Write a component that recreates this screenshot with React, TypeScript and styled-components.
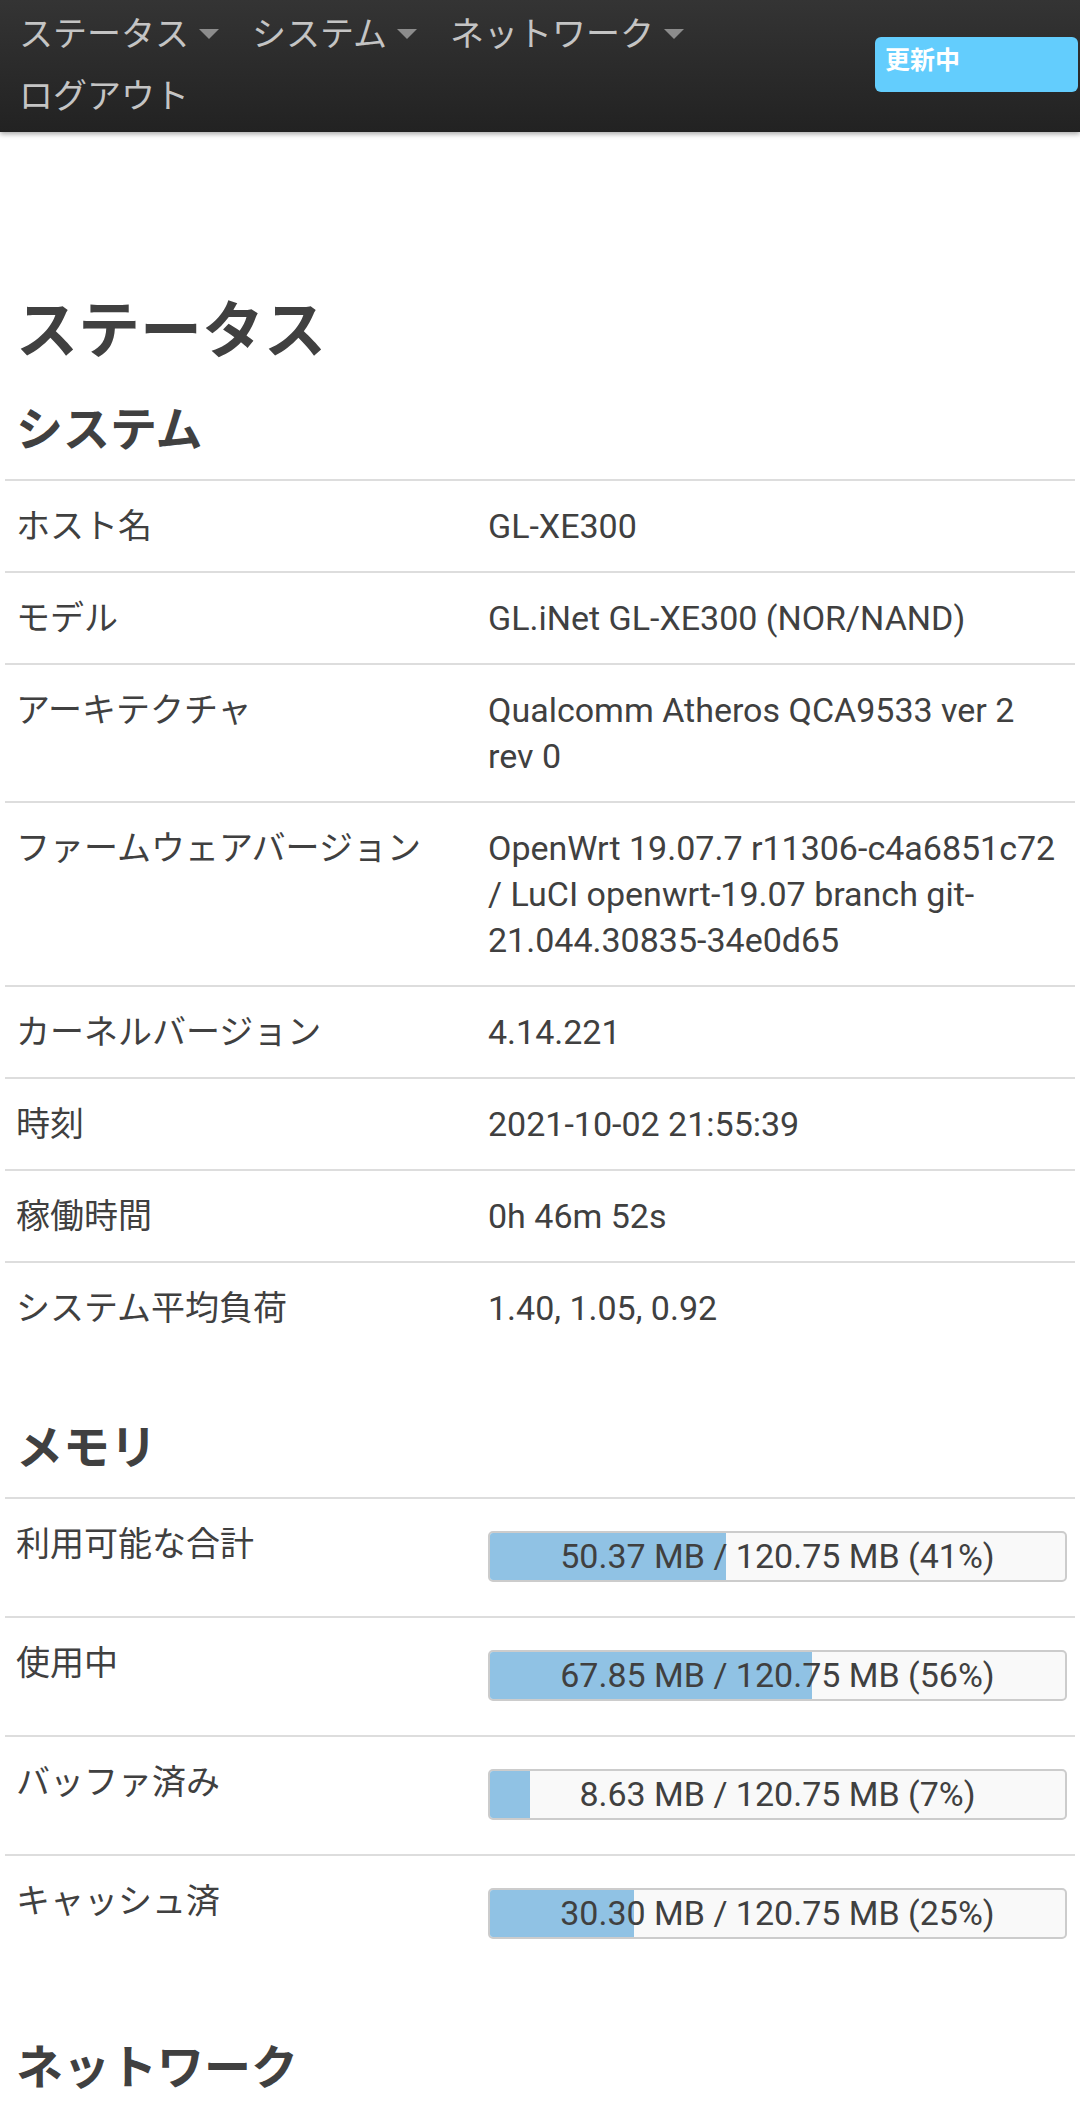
import styled, { createGlobalStyle } from 'styled-components';

const GlobalStyle = createGlobalStyle`
  html, body {
    margin: 0;
    padding: 0;
    background: #ffffff;
  }
  body {
    font-family: Roboto, "Noto Sans CJK JP", sans-serif;
    color: #404040;
  }
`;

const Header = styled.header`
  display: flex;
  align-items: flex-start;
  height: 132px;
  padding: 0 2px 0 19px;
  box-sizing: border-box;
  background: linear-gradient(#343434, #222222);
  box-shadow: 0 2px 5px rgba(0, 0, 0, 0.35);
`;

const Nav = styled.nav`
  flex: 1;
  display: flex;
  flex-wrap: wrap;
  column-gap: 33px;
  max-width: 760px;
`;

const NavItem = styled.div`
  display: flex;
  align-items: center;
  height: 62px;
  font-size: 34px;
  color: #c4c4c4;
  white-space: nowrap;
`;

const Caret = styled.span`
  width: 0;
  height: 0;
  margin-left: 10px;
  margin-top: 6px;
  border-style: solid;
  border-width: 10px 10px 0 10px;
  border-color: #8c8c8c transparent transparent transparent;
`;

const RefreshButton = styled.div`
  margin-top: 37px;
  margin-left: auto;
  width: 203px;
  height: 55px;
  box-sizing: border-box;
  padding: 9px 10px 0;
  border-radius: 6px;
  background: #63cdfd;
  color: #ffffff;
  font-size: 25px;
  font-weight: 700;
  line-height: 30px;
`;

const Main = styled.main`
  padding: 163px 5px 0;
`;

const Title = styled.h1`
  margin: 0;
  padding-left: 11px;
  font-size: 62px;
  line-height: 74px;
  font-weight: 700;
  color: #404040;
`;

const Section = styled.section`
  margin-bottom: 67px;
`;

const SectionTitle = styled.h2`
  margin: 33px 0 22px;
  padding-left: 11px;
  font-size: 47px;
  line-height: 55px;
  font-weight: 700;
  color: #404040;
`;

const Row = styled.div`
  display: grid;
  grid-template-columns: 472px 1fr;
  border-top: 2px solid #dddddd;
  padding: 22px 0;
  font-size: 34px;
  line-height: 46px;
`;

const Label = styled.div`
  padding: 0 11px;
`;

const Value = styled.div`
  padding: 0 11px;
`;

const BarCell = styled.div`
  padding: 10px 8px 12px 11px;
`;

const Bar = styled.div`
  position: relative;
  height: 51px;
  box-sizing: border-box;
  border: 2px solid #cccccc;
  border-radius: 5px;
  background: #f9f9f9;
  overflow: hidden;
`;

const BarFill = styled.div`
  position: absolute;
  left: 0;
  top: 0;
  bottom: 0;
  background: #90c2e4;
`;

const BarText = styled.div`
  position: relative;
  text-align: center;
  line-height: 47px;
  font-size: 34px;
  color: #404040;
`;

const system: [string, string][] = [
  ['ホスト名', 'GL-XE300'],
  ['モデル', 'GL.iNet GL-XE300 (NOR/NAND)'],
  ['アーキテクチャ', 'Qualcomm Atheros QCA9533 ver 2 rev 0'],
  ['ファームウェアバージョン', 'OpenWrt 19.07.7 r11306-c4a6851c72 / LuCI openwrt-19.07 branch git-21.044.30835-34e0d65'],
  ['カーネルバージョン', '4.14.221'],
  ['時刻', '2021-10-02 21:55:39'],
  ['稼働時間', '0h 46m 52s'],
  ['システム平均負荷', '1.40, 1.05, 0.92'],
];

const memory: { label: string; used: string; pct: number }[] = [
  { label: '利用可能な合計', used: '50.37 MB', pct: 41 },
  { label: '使用中', used: '67.85 MB', pct: 56 },
  { label: 'バッファ済み', used: '8.63 MB', pct: 7 },
  { label: 'キャッシュ済', used: '30.30 MB', pct: 25 },
];

const App = () => {
  return (
    <>
      <GlobalStyle />
      <Header>
        <Nav>
          <NavItem>ステータス<Caret /></NavItem>
          <NavItem>システム<Caret /></NavItem>
          <NavItem>ネットワーク<Caret /></NavItem>
          <NavItem>ログアウト</NavItem>
        </Nav>
        <RefreshButton>更新中</RefreshButton>
      </Header>

      <Main>
        <Title>ステータス</Title>

        <Section>
          <SectionTitle>システム</SectionTitle>
          {system.map(([k, v]) => (
            <Row key={k}>
              <Label>{k}</Label>
              <Value>{v}</Value>
            </Row>
          ))}
        </Section>

        <Section>
          <SectionTitle>メモリ</SectionTitle>
          {memory.map((m) => (
            <Row key={m.label}>
              <Label>{m.label}</Label>
              <BarCell>
                <Bar>
                  <BarFill style={{ width: `${m.pct}%` }} />
                  <BarText>{m.used} / 120.75 MB ({m.pct}%)</BarText>
                </Bar>
              </BarCell>
            </Row>
          ))}
        </Section>

        <Section>
          <SectionTitle>ネットワーク</SectionTitle>
        </Section>
      </Main>
    </>
  );
};

export default App;
